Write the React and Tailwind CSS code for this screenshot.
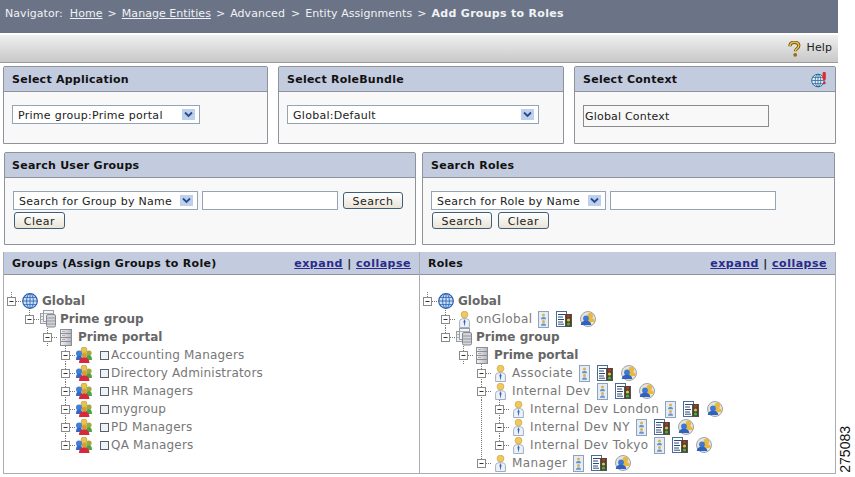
const font = "font-['DejaVu_Sans',Verdana,sans-serif]";

function Globe({ size = 16 }) {
  return (
    <svg width={size} height={size} viewBox="0 0 16 16" className="shrink-0">
      <circle cx="8" cy="8" r="7.3" fill="#cfe0f6" stroke="#2a5fa8" strokeWidth="1.2" />
      <ellipse cx="8" cy="8" rx="3.4" ry="7.3" fill="none" stroke="#2f6ab8" strokeWidth="0.9" />
      <path d="M8 .7V15.3M.7 8H15.3M1.8 4.4H14.2M1.8 11.6H14.2" stroke="#2f6ab8" strokeWidth="0.9" fill="none" />
    </svg>
  );
}

function GlobeAlert() {
  return (
    <svg width="16" height="17" viewBox="0 0 16 17" className="shrink-0">
      <circle cx="7" cy="9.5" r="6.3" fill="#e4edf8" stroke="#2a6a96" strokeWidth="1" />
      <ellipse cx="7" cy="9.5" rx="2.8" ry="6.3" fill="none" stroke="#2a6a96" strokeWidth="0.8" />
      <path d="M.7 9.5H13.3M7 3.2V15.8M1.6 6.4H12.4M1.6 12.6H12.4" stroke="#2a6a96" strokeWidth="0.8" fill="none" />
      <rect x="11.6" y="1" width="3.2" height="8" rx="1" fill="#e02a30" />
      <rect x="12" y="10.6" width="2.6" height="2.6" rx="1" fill="#e02a30" />
    </svg>
  );
}

function HelpIcon() {
  return (
    <svg width="15" height="16" viewBox="0 0 15 16" className="shrink-0">
      <path d="M3 5.2C3 2.6 5 1.3 7.4 1.3c2.6 0 4.4 1.4 4.4 3.5 0 2.6-3.4 3-3.4 5.4" fill="none" stroke="#6b5410" strokeWidth="3.2" />
      <path d="M3 5.2C3 2.6 5 1.3 7.4 1.3c2.6 0 4.4 1.4 4.4 3.5 0 2.6-3.4 3-3.4 5.4" fill="none" stroke="#e8c04a" strokeWidth="1.5" />
      <circle cx="8.2" cy="13.8" r="1.9" fill="#8d701c" />
    </svg>
  );
}

function Cluster() {
  return (
    <svg width="16" height="18" viewBox="0 0 16 18" className="shrink-0">
      <rect x="0.5" y="3.5" width="7" height="10" fill="#eceef0" stroke="#9a9da4" />
      <rect x="3.5" y="0.5" width="10" height="11" fill="#f2f3f5" stroke="#9a9da4" />
      <path d="M4 3.5H13M1 6.5H3M1 9.5H3" stroke="#b0b3b9" />
      <rect x="6.5" y="4.5" width="9" height="12.5" rx="1.5" fill="#d3d5da" stroke="#85888f" />
      <path d="M7 8H15M7 11H15M7 14H15" stroke="#93969d" />
    </svg>
  );
}

function Portal() {
  return (
    <svg width="12" height="17" viewBox="0 0 12 17" className="shrink-0">
      <defs>
        <linearGradient id="portalg" x1="0" x2="1" y1="0" y2="0">
          <stop offset="0" stopColor="#f4f4f6" />
          <stop offset="1" stopColor="#b3b5bb" />
        </linearGradient>
      </defs>
      <rect x="0.5" y="0.5" width="11" height="16" fill="url(#portalg)" stroke="#8b8d93" />
      <path d="M1 4.5H11M1 8.5H11M1 12.5H11" stroke="#8b8d93" />
      <path d="M2 2.5H5M2 6.5H5M2 10.5H5" stroke="#a9abb1" />
    </svg>
  );
}

function People() {
  return (
    <svg width="16" height="16" viewBox="0 0 16 16" className="shrink-0">
      <circle cx="8" cy="3" r="3" fill="#e8c34e" stroke="#a88a26" strokeWidth="0.5" />
      <path d="M4 9.5C4 6.5 6 5.2 8 5.2S12 6.5 12 9.5Z" fill="#e6c24e" />
      <circle cx="13" cy="6" r="2.6" fill="#a2a83e" />
      <path d="M9.5 13C9.5 9.5 11.2 8 13 8S16 9.5 16 13Z" fill="#4aa544" />
      <circle cx="3" cy="6.5" r="3" fill="#3f7fd8" />
      <path d="M0 13C0 9.5 1.2 8.6 3 8.6S6.4 9.5 6.4 13Z" fill="#3468c8" />
      <circle cx="8.2" cy="8.6" r="2.5" fill="#d89a38" />
      <path d="M3 16C3 12.2 5.4 10.6 8.2 10.6S13.4 12.2 13.4 16Z" fill="#d8283c" />
    </svg>
  );
}

function Person() {
  return (
    <svg width="11" height="17" viewBox="0 0 11 17" className="shrink-0">
      <circle cx="5.5" cy="3.6" r="3.4" fill="#f0c860" stroke="#c49a30" strokeWidth="0.6" />
      <path d="M0.6 16.5V10.5C0.6 8.6 2.4 7.6 5.5 7.6S10.4 8.6 10.4 10.5V16.5Z" fill="#eef2f8" stroke="#8a9cb8" strokeWidth="0.8" />
      <path d="M5.5 8L4.5 10.5 5.5 15.5 6.5 10.5Z" fill="#3a68b8" />
    </svg>
  );
}

function Badge() {
  return (
    <svg width="11" height="17" viewBox="0 0 11 17" className="shrink-0">
      <rect x="0.5" y="0.5" width="10" height="16" fill="#e4ecf6" stroke="#8fa2bc" />
      <circle cx="5.5" cy="4" r="1.5" fill="#d8b44a" />
      <path d="M3 8.2C3 6.4 4 6 5.5 6S8 6.4 8 8.2Z" fill="#6a90cc" />
      <circle cx="5.5" cy="10.5" r="1.5" fill="#d8b44a" />
      <path d="M3 14.8C3 13 4 12.5 5.5 12.5S8 13 8 14.8Z" fill="#6a90cc" />
    </svg>
  );
}

function DocLight() {
  return (
    <svg width="17" height="16" viewBox="0 0 17 16" className="shrink-0">
      <rect x="0.5" y="0.5" width="10" height="15" fill="#fff" stroke="#4a6a98" />
      <path d="M2 3.5H9M2 6H7M2 8.5H8M2 11H7M2 13.2H8" stroke="#2a4a78" />
      <rect x="9" y="3" width="7" height="13" fill="#5a5246" />
      <rect x="10" y="3" width="5" height="12" rx="1" fill="#4a4238" />
      <circle cx="12.5" cy="5" r="1.6" fill="#b8342a" />
      <circle cx="12.5" cy="9" r="1.6" fill="#d8c832" />
      <circle cx="12.5" cy="13" r="1.6" fill="#3cb83c" />
    </svg>
  );
}

function Users() {
  return (
    <svg width="16" height="16" viewBox="0 0 16 16" className="shrink-0">
      <circle cx="8" cy="8" r="7.5" fill="#e8e4d4" stroke="#9aa4b4" />
      <circle cx="10.4" cy="4.6" r="2.8" fill="#e8b840" />
      <path d="M5.4 11C5.4 8 8 7 10.4 7S15 8 15 11Z" fill="#e8b840" />
      <circle cx="6" cy="7.4" r="2.9" fill="#3f78d0" />
      <path d="M0.8 14C0.8 11 3.4 9.8 6 9.8S11.2 11 11.2 14Z" fill="#2f62c0" />
    </svg>
  );
}

function Connector({ top = true, down = false }) {
  return (
    <svg width="18" height="18" viewBox="0 0 18 18" className="shrink-0">
      {top && <path d="M7.5 0V5" stroke="#777" strokeDasharray="1 1" />}
      {down && <path d="M7.5 13V18" stroke="#777" strokeDasharray="1 1" />}
      <path d="M12 9.5H18" stroke="#777" strokeDasharray="1 1" />
      <rect x="3.5" y="5.5" width="8" height="8" fill="#fff" stroke="#8a8a8a" />
      <path d="M5.5 9.5H9.5" stroke="#333" />
    </svg>
  );
}

function Guide({ on }) {
  return (
    <svg width="18" height="18" viewBox="0 0 18 18" className="shrink-0">
      {on && <path d="M7.5 0V18" stroke="#777" strokeDasharray="1 1" />}
    </svg>
  );
}

function Row({ guides = [], top = true, down = false, children }) {
  return (
    <div className="flex h-[18px] items-center">
      {guides.map((g, i) => (
        <Guide key={i} on={g} />
      ))}
      <Connector top={top} down={down} />
      {children}
    </div>
  );
}

function Bold({ children, className = "ml-1" }) {
  return <span className={`${className} text-[12px] font-bold tracking-[0px] text-[#666]`}>{children}</span>;
}

function GroupRow({ name, down = true }) {
  return (
    <Row guides={[false, false, false]} down={down}>
      <People />
      <span className="ml-2 h-[9px] w-[9px] shrink-0 border border-[#55606e] bg-[#eef2f6]" />
      <span className="ml-[2px] text-[12px] tracking-[0.2px] text-[#777]">{name}</span>
    </Row>
  );
}

function RoleRow({ name, guides, down }) {
  return (
    <Row guides={guides} down={down}>
      <span className="ml-[3px] shrink-0">
        <Person />
      </span>
      <span className="ml-[6px] text-[12px] tracking-[0.4px] text-[#777]">{name}</span>
      <span className="ml-[6px] shrink-0">
        <Badge />
      </span>
      <span className="ml-[7px] shrink-0">
        <DocLight />
      </span>
      <span className="ml-[7px] shrink-0">
        <Users />
      </span>
    </Row>
  );
}

function SelectBox({ label, className }) {
  return (
    <div className={`flex h-[19px] shrink-0 items-center justify-between border border-[#93a4b4] bg-white pl-[5px] pr-[4px] text-[11px] tracking-[0.28px] text-[#222] ${className}`}>
      <span className="mt-[3px]">{label}</span>
      <span className="flex h-[11px] w-[13px] items-center justify-center bg-[#bdd0ee]">
        <svg width="9" height="7" viewBox="0 0 9 7">
          <path d="M1 1.5L4.5 5 8 1.5" fill="none" stroke="#2a4a88" strokeWidth="1.8" />
        </svg>
      </span>
    </div>
  );
}

function Btn({ children, className }) {
  return (
    <button className={`flex h-[17px] shrink-0 items-center justify-center rounded-[3px] border border-[#3f5f78] bg-gradient-to-b from-white to-[#e9e4d6] text-[11px] tracking-[0.5px] text-[#222] ${className}`}>
      <span className="mt-[3px]">{children}</span>
    </button>
  );
}

function PanelHead({ title, right, className = "", tracking = "tracking-[0.25px]" }) {
  return (
    <div className={`flex items-center justify-between border-b border-[#8d929c] bg-[#c3cbdf] text-[11px] font-bold ${tracking} text-[#111] ${className}`}>
      <span className="mt-[2px]">{title}</span>
      {right}
    </div>
  );
}

function Panel({ title, right, className, pad = "pl-2", children }) {
  return (
    <div className={`shrink-0 rounded-t-[2px] border border-[#8f9298] bg-[#f8f8f8] ${className}`}>
      <PanelHead title={title} right={right} className={`h-[25px] pr-[8px] ${pad}`} />
      {children}
    </div>
  );
}

function ExpandLinks() {
  return (
    <span className="mt-[2px] text-[11px] font-bold tracking-[0.5px] text-[#222]">
      <a className="text-[#2a2a8a] underline">expand</a> | <a className="text-[#2a2a8a] underline">collapse</a>
    </span>
  );
}

export default function App() {
  return (
    <div className={`flex h-[477px] w-[855px] overflow-hidden bg-white ${font}`}>
      <div className="w-[838px] shrink-0">
        <div className="flex h-[33px] items-center bg-[#6b7486] pb-[5px] pl-[5px] text-[11px] tracking-[0.05px] text-[#f0f2f5]">
          <span>Navigator:</span>
          <a className="ml-[7px] underline">Home</a>
          <span className="ml-[5px]">&gt;</span>
          <a className="ml-[5px] underline">Manage Entities</a>
          <span className="ml-[5px]">&gt;</span>
          <span className="ml-[5px]">Advanced</span>
          <span className="ml-[6px]">&gt;</span>
          <span className="ml-[5px]">Entity Assignments</span>
          <span className="ml-[5px]">&gt;</span>
          <span className="ml-[5px] text-[11px] font-bold tracking-[0.3px]">Add Groups to Roles</span>
        </div>
        <div className="flex h-[30px] items-center justify-end gap-[5px] border-t-2 border-b border-t-white border-b-[#9a9a9a] bg-gradient-to-b from-[#f0f0f0] to-[#c8c8c8] pr-[6px] text-[11px] tracking-[0.1px] text-[#222]">
          <HelpIcon />
          <span>Help</span>
        </div>

        <div className="mt-[3px] flex gap-[10px] pl-[3px]">
          <Panel title="Select Application" className="h-[78px] w-[265px]">
            <div className="pl-2 pt-[13px]">
              <SelectBox label="Prime group:Prime portal" className="w-[188px]" />
            </div>
          </Panel>
          <Panel title="Select RoleBundle" className="h-[78px] w-[286px]">
            <div className="pl-2 pt-[13px]">
              <SelectBox label="Global:Default" className="w-[252px]" />
            </div>
          </Panel>
          <Panel
            title="Select Context"
            right={<span className="mt-px"><GlobeAlert /></span>}
            className="h-[78px] w-[262px]"
          >
            <div className="pl-2 pt-[13px]">
              <div className="flex h-[22px] w-[186px] items-center border border-[#8a8a8a] bg-[#f8f8f8] pl-px pt-[2px] text-[11px] tracking-[0.2px] text-[#222]">
                Global Context
              </div>
            </div>
          </Panel>
        </div>

        <div className="mt-[8px] flex pl-[4px]">
          <Panel title="Search User Groups" pad="pl-[7px]" className="h-[93px] w-[412px]">
            <div className="pl-2 pt-[13px]">
              <div className="flex items-center">
                <SelectBox label="Search for Group by Name" className="w-[185px]" />
                <div className="ml-[4px] h-[19px] w-[136px] border border-[#93a4b4] bg-white" />
                <Btn className="ml-[5px] w-[60px]">Search</Btn>
              </div>
              <Btn className="ml-px mt-[2px] w-[51px]">Clear</Btn>
            </div>
          </Panel>
          <Panel title="Search Roles" className="ml-[6px] h-[93px] w-[413px]">
            <div className="pl-2 pt-[13px]">
              <div className="flex items-center">
                <SelectBox label="Search for Role by Name" className="w-[175px]" />
                <div className="ml-[4px] h-[19px] w-[166px] border border-[#93a4b4] bg-white" />
              </div>
              <div className="ml-px mt-[2px] flex gap-[6px]">
                <Btn className="w-[60px]">Search</Btn>
                <Btn className="w-[51px]">Clear</Btn>
              </div>
            </div>
          </Panel>
        </div>

        <div className="ml-[3px] mt-[7px] flex h-[222px] w-[833px] border-b border-l border-r border-[#a9acb2]">
          <div className="w-[416px] shrink-0 border-r border-[#a9acb2]">
            <PanelHead title="Groups (Assign Groups to Role)" tracking="tracking-[0.32px]" right={<ExpandLinks />} className="h-[23px] pl-2 pr-2" />
            <div className="pt-[17px]">
              <Row>
                <Globe />
                <Bold>Global</Bold>
              </Row>
              <Row guides={[false]}>
                <Cluster />
                <Bold>Prime group</Bold>
              </Row>
              <Row guides={[false, false]} down>
                <span className="ml-[2px]">
                  <Portal />
                </span>
                <Bold className="ml-[6px]">Prime portal</Bold>
              </Row>
              <GroupRow name="Accounting Managers" />
              <GroupRow name="Directory Administrators" />
              <GroupRow name="HR Managers" />
              <GroupRow name="mygroup" />
              <GroupRow name="PD Managers" />
              <GroupRow name="QA Managers" down={false} />
            </div>
          </div>
          <div className="min-w-0 flex-1">
            <PanelHead title="Roles" right={<ExpandLinks />} className="h-[23px] pl-2 pr-[8px]" />
            <div className="pt-[17px]">
              <Row>
                <Globe />
                <Bold>Global</Bold>
              </Row>
              <RoleRow name="onGlobal" guides={[false]} down />
              <Row guides={[false]}>
                <Cluster />
                <Bold>Prime group</Bold>
              </Row>
              <Row guides={[false, false]} down>
                <span className="ml-[2px]">
                  <Portal />
                </span>
                <Bold className="ml-[6px]">Prime portal</Bold>
              </Row>
              <RoleRow name="Associate" guides={[false, false, false]} down />
              <RoleRow name="Internal Dev" guides={[false, false, false]} down />
              <RoleRow name="Internal Dev London" guides={[false, false, false, true]} down />
              <RoleRow name="Internal Dev NY" guides={[false, false, false, true]} down />
              <RoleRow name="Internal Dev Tokyo" guides={[false, false, false, true]} />
              <RoleRow name="Manager" guides={[false, false, false]} />
            </div>
          </div>
        </div>
      </div>
      <div className="flex h-[473px] flex-1 items-end justify-start">
        <span className="rotate-180 font-['Liberation_Sans',Arial,sans-serif] text-[14px] leading-[14px] text-[#111] [writing-mode:vertical-rl]">
          275083
        </span>
      </div>
    </div>
  );
}
